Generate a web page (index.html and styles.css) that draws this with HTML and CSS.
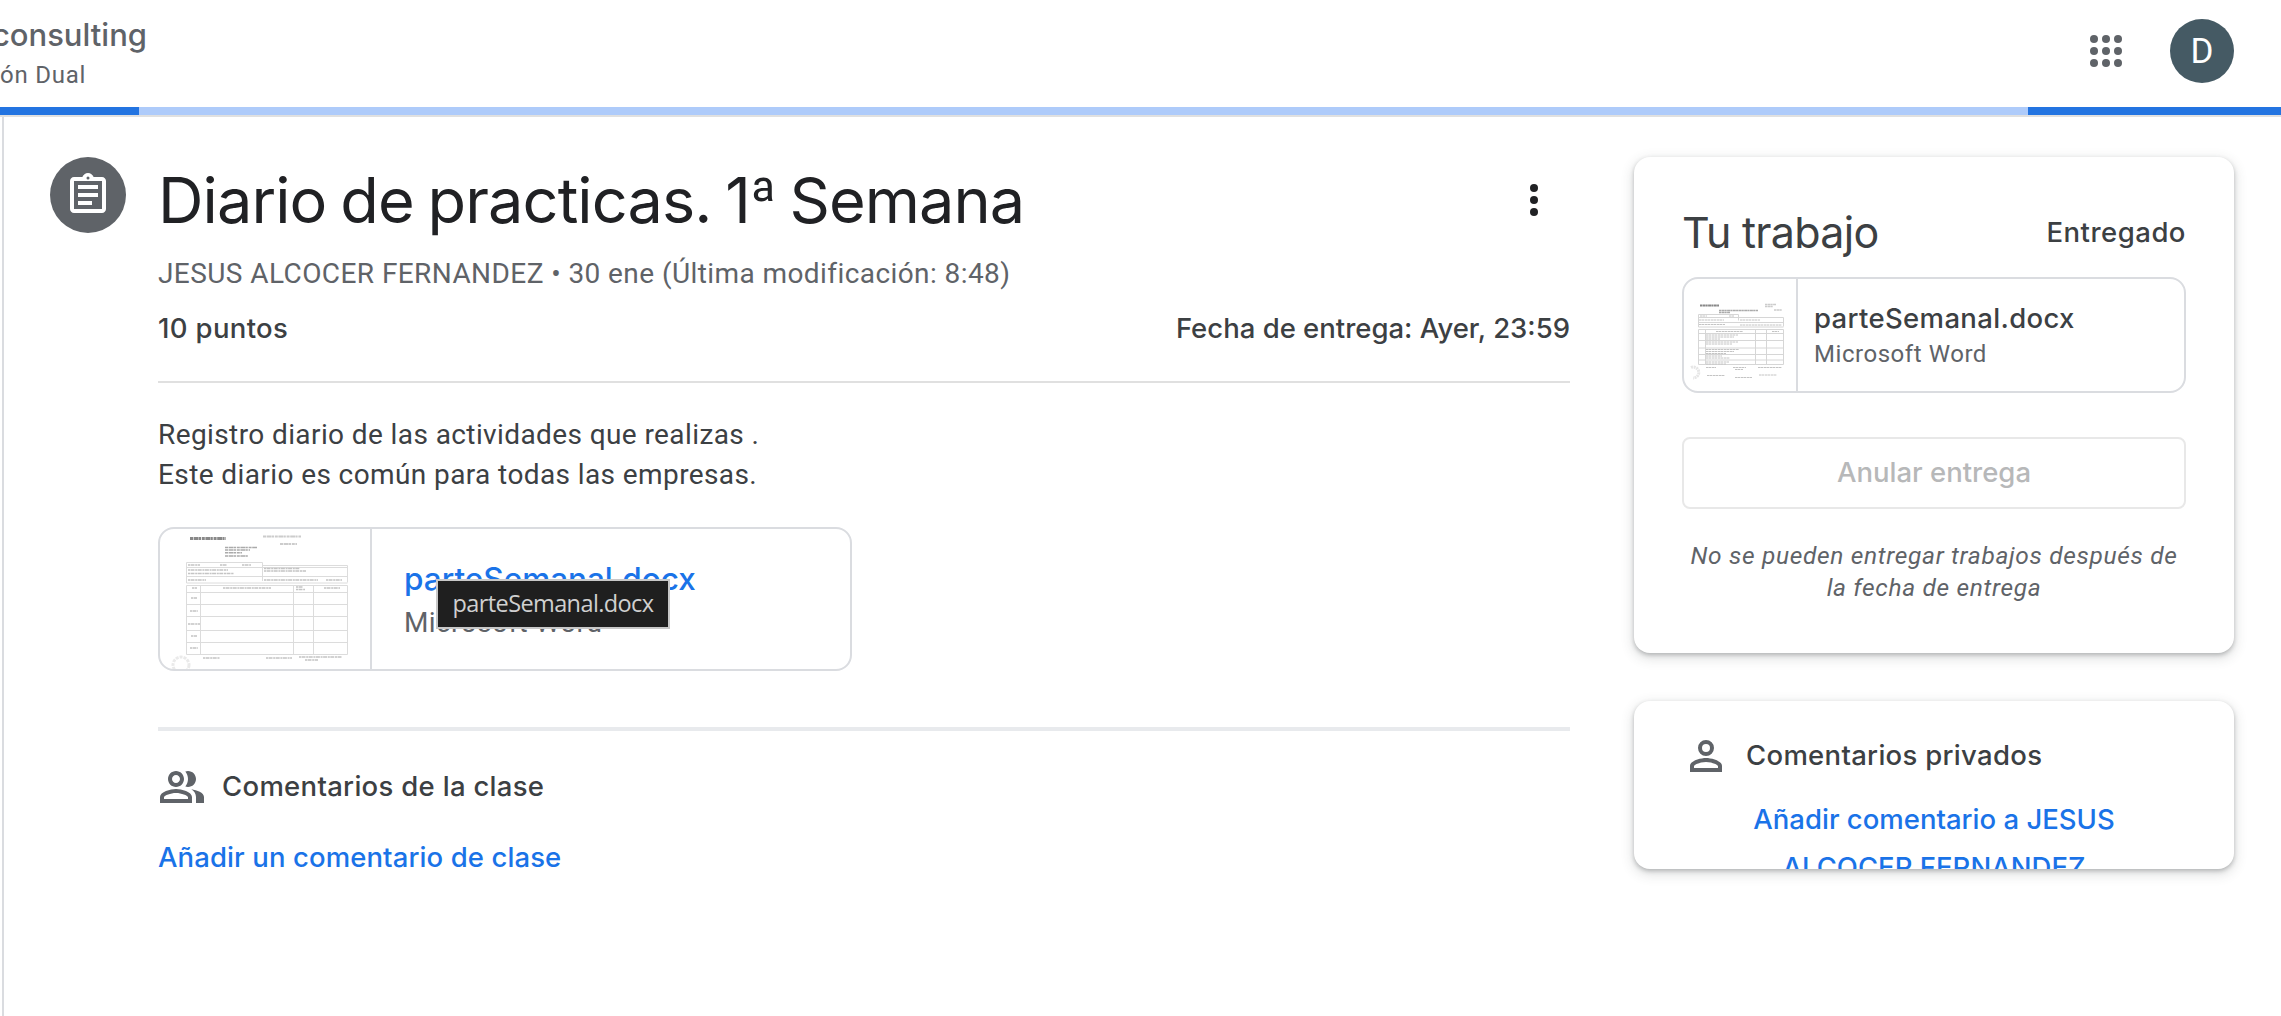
FILE: index.html
```html
<!DOCTYPE html>
<html lang="es">
<head>
<meta charset="utf-8">
<title>Diario de practicas. 1ª Semana</title>
<link rel="stylesheet" href="styles.css">
</head>
<body>
<header class="topbar">
  <div class="course">
    <div class="course-name">consulting</div>
    <div class="course-section">ón Dual</div>
  </div>
  <div class="account">
    <svg class="apps" viewBox="0 0 32 32" width="32" height="32" fill="#5f6368">
      <circle cx="4" cy="4" r="4"/><circle cx="16" cy="4" r="4"/><circle cx="28" cy="4" r="4"/>
      <circle cx="4" cy="16" r="4"/><circle cx="16" cy="16" r="4"/><circle cx="28" cy="16" r="4"/>
      <circle cx="4" cy="28" r="4"/><circle cx="16" cy="28" r="4"/><circle cx="28" cy="28" r="4"/>
    </svg>
    <div class="avatar">D</div>
  </div>
</header>
<div class="progress"><div class="progress-start"></div><div class="progress-end"></div></div>

<div class="page">
  <div class="type-icon">
    <svg viewBox="0 0 24 24" width="48" height="48" fill="#fff">
      <path d="M7 15h7v2H7zm0-4h10v2H7zm0-4h10v2H7z"/>
      <path fill-rule="evenodd" d="M19 3h-4.18C14.4 1.84 13.3 1 12 1s-2.4.84-2.82 2H5c-1.1 0-2 .9-2 2v14c0 1.1.9 2 2 2h14c1.1 0 2-.9 2-2V5c0-1.100-.9-2-2-2zm-7-.25a.75.75 0 1 1 0 1.500.75.75 0 0 1 0-1.500zM19 19H5V5h14v14z"/>
    </svg>
  </div>

  <main class="detail">
    <div class="title-row">
      <h1>Diario de practicas. 1<span class="ordinal">ª</span> Semana</h1>
      <svg class="more" viewBox="0 0 24 24" width="48" height="48" fill="#202124">
        <circle cx="12" cy="6" r="2"/><circle cx="12" cy="12" r="2"/><circle cx="12" cy="18" r="2"/>
      </svg>
    </div>
    <p class="meta">JESUS ALCOCER FERNANDEZ • 30 ene (Última modificación: 8:48)</p>
    <div class="due-row">
      <span class="points">10 puntos</span>
      <span class="due">Fecha de entrega: Ayer, 23:59</span>
    </div>
    <p class="description">Registro diario de las actividades que realizas .<br>Este diario es común para todas las empresas.</p>

    <div class="attachment attachment-main">
      <div class="thumb">
        <svg viewBox="0 0 211 140" width="211" height="140" fill="none">
          <g stroke="#aaa" stroke-dasharray="3 .6 5 .4 2 .8">
            <path stroke="#888" stroke-width="3" d="M30 9.500h36"/>
            <path stroke="#ccc" stroke-width="2" d="M103 7.500h38M120 15h17"/>
            <path stroke="#aaa" stroke-width="1.600" d="M65 18.500h32M65 21h25M65 23.700h17M65 27h23"/>
          </g>
          <path stroke="#dcdcdc" d="M26.500 54V33.500h76V52M102.500 36.500h85v17M26.500 38.500h161M26.500 47.500h161M26.500 54h161"/>
          <path stroke="#dcdcdc" d="M26.500 56.500h161v69h-161zM26.500 63.500h161M26.500 75.500h161M26.500 87.500h161M26.500 101.500h161M26.500 113.500h161M40.500 56.500v69M133.500 56.500v69M153.500 56.500v69"/>
          <g stroke="#c4c4c4" stroke-width="1.500" stroke-dasharray="2 .5 4 .7">
            <path d="M28 36h12M60 36h7M82 36h9M28 41h40M28 44.500h46M104 39.500h36M104 42h42M28 51h18M104 51h54M166 51h16"/>
            <path d="M32 59h5M63 59h48M136 58h7M136 60.500h9M164 59h16M31 69h6M30 82h8M28 95h12M31 107h6M30 119h8"/>
            <path d="M43 129h17M106 129h26M139 128h43M145 131h13"/>
          </g>
          <circle cx="21" cy="136" r="8" stroke="#eaeaea" stroke-width="3" stroke-dasharray="3 1"/>
        </svg>
      </div>
      <div class="file">
        <div class="file-name">parteSemanal.docx</div>
        <div class="file-type">Microsoft Word</div>
      </div>
      <div class="tooltip">parteSemanal.docx</div>
    </div>

    <section class="comments">
      <div class="comments-head">
        <svg viewBox="0 0 24 24" width="48" height="48" fill="#5f6368">
          <path fill-rule="evenodd" d="M9 12c2.210 0 4-1.790 4-4s-1.790-4-4-4-4 1.790-4 4 1.790 4 4 4zm0-6c1.100 0 2 .9 2 2s-.9 2-2 2-2-.9-2-2 .9-2 2-2zM9 13c-2.670 0-8 1.340-8 4v3h16v-3c0-2.660-5.330-4-8-4zm6 5H3v-.99C3.200 16.290 6.300 15 9 15s5.800 1.290 6 2v1z"/>
          <path d="M15 12c2.210 0 4-1.790 4-4s-1.790-4-4-4c-.47 0-.91.1-1.330.24C14.500 5.270 15 6.580 15 8s-.5 2.730-1.330 3.760c.42.14.86.24 1.330.24zM16.670 13.130C18.040 14.060 19 15.320 19 17v3h4v-3c0-2.180-3.570-3.470-6.330-3.870z"/>
        </svg>
        <span>Comentarios de la clase</span>
      </div>
      <a class="add-comment">Añadir un comentario de clase</a>
    </section>
  </main>

  <aside class="side">
    <section class="card work">
      <div class="work-head">
        <h2>Tu trabajo</h2>
        <span class="status">Entregado</span>
      </div>
      <div class="attachment attachment-side">
        <div class="thumb">
          <svg viewBox="0 0 113 112" width="113" height="112" fill="none">
            <g stroke="#aaa" stroke-width="1.500" stroke-dasharray="2 .4 3 .3">
              <path stroke="#888" stroke-width="2" d="M16 26.500h19"/>
              <path stroke="#ccc" d="M81 25.500h11M81 27.500h8M90 31h8"/>
              <path d="M35 31.500h39M35 33.500h11"/>
            </g>
            <path stroke="#d6d6d6" d="M14.500 48V35.500h40v6M14.500 38.500h85v9M14.500 43.500h85M14.500 48h85"/>
            <path stroke="#d6d6d6" d="M14.500 50.500h85v35h-85zM14.500 54.500h85M14.500 61.500h85M14.500 69h85M14.500 75.500h85M14.500 81h85M21.500 50.500v35M71.500 50.500v35M82.500 50.500v35"/>
            <g stroke="#c4c4c4" stroke-dasharray="2 .4 3 .6">
              <path d="M16 37h7M45 37h5M15 41h25M15 45.500h26M56 41h20M56 46h42M32 52.500h27M88 52.500h7"/>
              <path d="M22 56h32M22 58h28M22 60h14M22 63h32M22 65h26M22 70.500h33M22 72.500h28M22 74.500h20M22 77h16M22 79h24M22 83h23M22 85h20"/>
              <path d="M22 88.500h10M49 88.500h13M51 90.500h8M74 88.500h24M23 96.500h18M51 98.500h17M75 96h18"/>
            </g>
            <path d="M7 88.500a5.500 5.500 0 1 1 2 10.500" stroke="#e6e6e6" stroke-width="3" stroke-dasharray="2 .7"/>
          </svg>
        </div>
        <div class="file">
          <div class="file-name">parteSemanal.docx</div>
          <div class="file-type">Microsoft Word</div>
        </div>
      </div>
      <button class="unsubmit" disabled>Anular entrega</button>
      <p class="note">No se pueden entregar trabajos después de<br>la fecha de entrega</p>
    </section>

    <section class="card private">
      <div class="comments-head">
        <svg viewBox="0 0 24 24" width="48" height="48" fill="#5f6368">
          <path fill-rule="evenodd" d="M12 4a4 4 0 1 0 0 8 4 4 0 0 0 0-8zm0 2a2 2 0 1 1 0 4 2 2 0 0 1 0-4zM12 13c-2.670 0-8 1.340-8 4v3h16v-3c0-2.660-5.330-4-8-4zm6 5H6v-.99C6.200 16.290 9.300 15 12 15s5.800 1.290 6 2v1z"/>
        </svg>
        <span>Comentarios privados</span>
      </div>
      <a class="private-link">Añadir comentario a JESUS<br>ALCOCER FERNANDEZ</a>
    </section>
  </aside>
</div>
</body>
</html>
```
FILE: styles.css
```css
* { box-sizing: border-box; }

body {
  margin: 0;
  height: 1016px;
  overflow: hidden;
  background: #fff;
  color: #3c4043;
  font-family: Roboto, sans-serif;
}

h1, h2, p { margin: 0; font-weight: 400; }
svg { display: block; flex: none; }

h1, h2, .course-name, .due-row, .file-name, .comments-head, .add-comment, .status, .private-link {
  font-family: Inter, sans-serif;
}

/* Header */
.topbar {
  display: flex;
  justify-content: space-between;
  height: 107px;
  padding-right: 47px;
}
.course { padding-top: 14px; color: #5f6368; white-space: nowrap; }
.course-name {
  width: 147px;
  display: flex;
  justify-content: flex-end;
  font-size: 31px;
  font-weight: 450;
  line-height: 42px;
  letter-spacing: 0;
}
.course-section {
  margin-top: 3px;
  font-size: 24px;
  line-height: 32px;
  letter-spacing: 0.75px;
}
.account { display: flex; align-items: center; gap: 48px; height: 102px; }
.avatar {
  width: 64px;
  height: 64px;
  border-radius: 50%;
  background: #455a64;
  color: #fff;
  font-size: 35px;
  line-height: 65px;
  text-align: center;
}
.progress {
  display: flex;
  justify-content: space-between;
  height: 10px;
  background: #aecbfa;
  border-bottom: 2px solid #e0e0e0;
}
.progress-start { width: 139px; background: #2374e1; }
.progress-end { width: 253px; background: #2374e1; }

/* Page columns */
.page {
  display: flex;
  align-items: flex-start;
  height: 899px;
  margin-left: 2px;
  padding: 40px 46px 0 44px;
  border-left: 2px solid #dadce0;
}
.type-icon {
  display: flex;
  align-items: center;
  justify-content: center;
  flex: none;
  width: 76px;
  height: 76px;
  margin: 0 32px 0 2px;
  border-radius: 50%;
  background: #5f6368;
}
.detail { flex: none; width: 1412px; }
.side { flex: none; width: 600px; margin-left: 64px; }

/* Assignment */
.title-row {
  display: flex;
  justify-content: space-between;
  align-items: center;
  height: 86px;
  padding-right: 12px;
}
h1 {
  color: #202124;
  font-size: 63px;
  line-height: 86px;
  letter-spacing: -0.9px;
  word-spacing: -3px;
}
.ordinal { font-weight: 300; }
.meta {
  margin-top: 11px;
  color: #5f6368;
  font-size: 28px;
  line-height: 40px;
  letter-spacing: 0.42px;
}
.due-row {
  display: flex;
  justify-content: space-between;
  margin-top: 14px;
  padding-bottom: 33px;
  border-bottom: 2px solid #e0e0e0;
  font-size: 27.5px;
  font-weight: 500;
  line-height: 40px;
}
.points { letter-spacing: 0.35px; }
.description {
  margin-top: 32px;
  font-size: 28px;
  line-height: 40px;
  letter-spacing: 0.4px;
}

/* Attachments */
.attachment {
  position: relative;
  display: flex;
  border: 2px solid #dadce0;
  border-radius: 16px;
}
.thumb { overflow: hidden; border-right: 2px solid #dadce0; }
.file-name { font-weight: 500; }
.file-type { color: #5f6368; }
.attachment-main { width: 694px; height: 144px; margin-top: 32px; }
.attachment-main .thumb { width: 212px; border-radius: 14px 0 0 14px; }
.attachment-main .file { padding: 28px 0 0 32px; }
.attachment-main .file-name { color: #1a73e8; font-size: 31.5px; line-height: 44px; }
.attachment-main .file-type { font-size: 28px; line-height: 44px; letter-spacing: 0.4px; }
.attachment-side { height: 116px; margin-top: 17px; }
.attachment-side .thumb { width: 114px; }
.attachment-side .file { padding: 21px 0 0 16px; }
.attachment-side .file-name { font-size: 27.5px; line-height: 36px; letter-spacing: 0.35px; }
.attachment-side .file-type { font-size: 24px; line-height: 36px; letter-spacing: 0.55px; }
.tooltip {
  position: absolute;
  left: 276px;
  top: 50px;
  width: 234px;
  height: 50px;
  border: 2px solid #c8c8c8;
  background: #1f1f1f;
  color: #d0d0d0;
  font: 23.5px/45px "Open Sans", sans-serif;
  letter-spacing: -0.6px;
  text-align: center;
}

/* Comments */
.comments { margin-top: 56px; padding-top: 32px; border-top: 4px solid #e8eaed; }
.comments-head {
  display: flex;
  align-items: center;
  gap: 16px;
  height: 48px;
  font-size: 27.5px;
  font-weight: 500;
  line-height: 34px;
  letter-spacing: 0.3px;
}
.comments-head span { padding-bottom: 2px; }
.add-comment {
  display: block;
  margin-top: 26px;
  color: #1a73e8;
  font-size: 27.5px;
  font-weight: 500;
  line-height: 40px;
  letter-spacing: 0.1px;
}

/* Side cards */
.card {
  border-radius: 16px;
  background: #fff;
  box-shadow: 0 2px 4px rgba(60, 64, 67, 0.3), 0 4px 12px 2px rgba(60, 64, 67, 0.15);
}
.work { height: 496px; padding: 47px 48px 0; }
.work-head { display: flex; justify-content: space-between; align-items: center; }
h2 { font-size: 43px; line-height: 56px; letter-spacing: -0.7px; }
.status { font-size: 27.5px; font-weight: 500; letter-spacing: 0.5px; }
.unsubmit {
  display: block;
  width: 100%;
  height: 72px;
  margin-top: 44px;
  padding: 0 0 2px;
  border: 2px solid #e8e8e8;
  border-radius: 8px;
  background: #fff;
  color: #b7b8b9;
  font: 500 27.5px Inter, sans-serif;
}
.note {
  margin-top: 31px;
  color: #5f6368;
  font-size: 24.5px;
  font-style: italic;
  line-height: 32px;
  letter-spacing: 0.67px;
  text-align: center;
  white-space: nowrap;
}
.private { height: 168px; margin-top: 48px; padding: 31px 48px 0; overflow: hidden; }
.private-link {
  display: block;
  margin-top: 15px;
  color: #1a73e8;
  font-size: 27.5px;
  font-weight: 500;
  line-height: 48px;
  text-align: center;
}
```
